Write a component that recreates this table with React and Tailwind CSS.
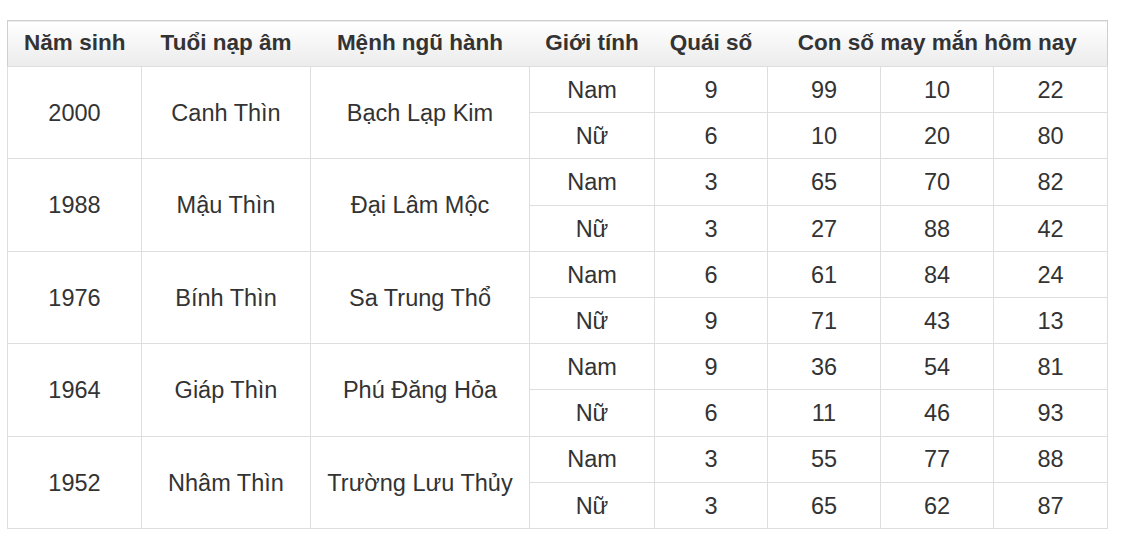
const rows = [
  {
    year: '2000',
    tuoi: 'Canh Thìn',
    menh: 'Bạch Lạp Kim',
    data: [
      ['Nam', '9', '99', '10', '22'],
      ['Nữ', '6', '10', '20', '80'],
    ],
  },
  {
    year: '1988',
    tuoi: 'Mậu Thìn',
    menh: 'Đại Lâm Mộc',
    data: [
      ['Nam', '3', '65', '70', '82'],
      ['Nữ', '3', '27', '88', '42'],
    ],
  },
  {
    year: '1976',
    tuoi: 'Bính Thìn',
    menh: 'Sa Trung Thổ',
    data: [
      ['Nam', '6', '61', '84', '24'],
      ['Nữ', '9', '71', '43', '13'],
    ],
  },
  {
    year: '1964',
    tuoi: 'Giáp Thìn',
    menh: 'Phú Đăng Hỏa',
    data: [
      ['Nam', '9', '36', '54', '81'],
      ['Nữ', '6', '11', '46', '93'],
    ],
  },
  {
    year: '1952',
    tuoi: 'Nhâm Thìn',
    menh: 'Trường Lưu Thủy',
    data: [
      ['Nam', '3', '55', '77', '88'],
      ['Nữ', '3', '65', '62', '87'],
    ],
  },
];

const td = 'border border-[#dedede] text-center align-middle p-0 pt-[2px]';
const th = 'text-center font-bold pb-[2px]';

export default function App() {
  return (
    <div className="bg-white w-[1129px] h-[545px] pt-[20px] pl-[7px] font-['Liberation_Sans',Arial,sans-serif] text-[#333]">
      <table className="w-[1100px] table-fixed border-collapse text-[23.5px]">
        <colgroup>
          <col className="w-[134px]" />
          <col className="w-[169px]" />
          <col className="w-[219px]" />
          <col className="w-[125px]" />
          <col className="w-[113px]" />
          <col className="w-[113px]" />
          <col className="w-[113px]" />
          <col className="w-[114px]" />
        </colgroup>
        <thead>
          <tr className="h-[46px] bg-gradient-to-b from-white to-[#ececec] border border-[#cfcfcf] text-[22.5px]">
            <th className={th}>Năm sinh</th>
            <th className={th}>Tuổi nạp âm</th>
            <th className={th}>Mệnh ngũ hành</th>
            <th className={th}>Giới tính</th>
            <th className={th}>Quái số</th>
            <th colSpan={3} className={th}>
              Con số may mắn hôm nay
            </th>
          </tr>
        </thead>
        <tbody>
          {rows.map((r) =>
            r.data.map((d, i) => (
              <tr key={r.year + i} className="h-[46.2px]">
                {i === 0 && (
                  <>
                    <td rowSpan={2} className={td}>{r.year}</td>
                    <td rowSpan={2} className={td}>{r.tuoi}</td>
                    <td rowSpan={2} className={td}>{r.menh}</td>
                  </>
                )}
                {d.map((v, j) => (
                  <td key={j} className={td}>{v}</td>
                ))}
              </tr>
            ))
          )}
        </tbody>
      </table>
    </div>
  );
}
